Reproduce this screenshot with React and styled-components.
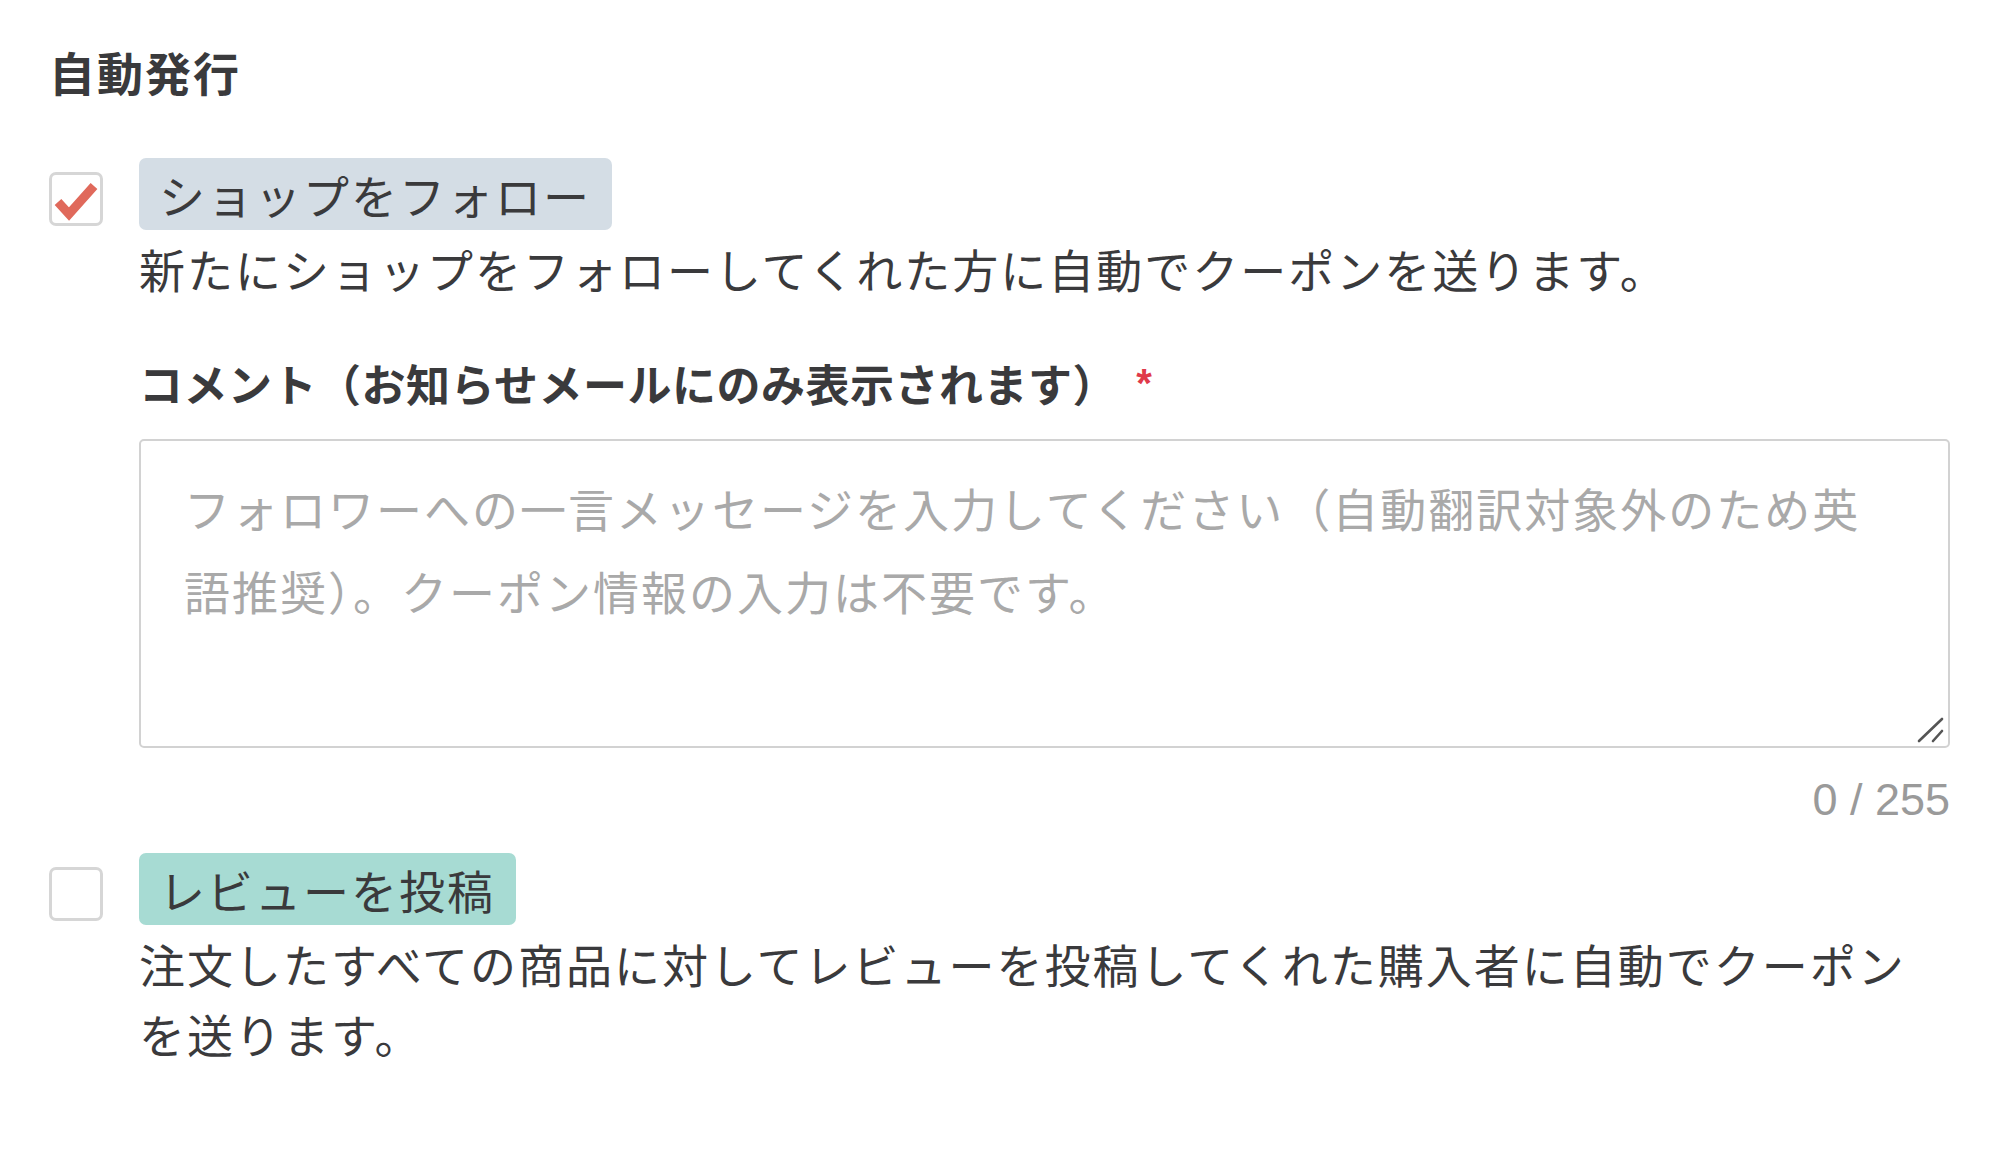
import React from "react";
import styled, { createGlobalStyle } from "styled-components";

const GlobalStyle = createGlobalStyle`
  html, body {
    margin: 0;
    padding: 0;
    background: #ffffff;
  }
  body {
    font-family: "Noto Sans CJK JP", "Noto Sans", sans-serif;
    color: #3a3a3c;
  }
`;

const Page = styled.div`
  padding: 36px 58px 40px 49px;
`;

const Heading = styled.h2`
  margin: 0 0 52px;
  font-size: 46px;
  line-height: 70px;
  font-weight: 700;
  letter-spacing: 2px;
`;

const OptionList = styled.div`
  display: flex;
  flex-direction: column;
  gap: 18px;
`;

const Option = styled.div`
  display: flex;
  align-items: flex-start;
  gap: 36px;
`;

const CheckBox = styled.span`
  flex: none;
  width: 54px;
  height: 54px;
  margin-top: 14px;
  box-sizing: border-box;
  border: 3px solid #d6d6d6;
  border-radius: 7px;
  background: #fff;
  display: flex;
  align-items: center;
  justify-content: center;
`;

const Body = styled.div`
  flex: 1;
  min-width: 0;
`;

const Tag = styled.span`
  display: inline-block;
  height: 72px;
  line-height: 72px;
  padding: 0 21px 0 20px;
  border-radius: 7px;
  font-size: 46px;
  letter-spacing: 2px;
  background: ${(p) => p.$bg};
`;

const Desc = styled.p`
  margin: 3px 0 0;
  font-size: 46px;
  line-height: 70px;
  letter-spacing: 2px;
`;

const Field = styled.div`
  margin-top: 45px;
  display: flex;
  flex-direction: column;
`;

const Label = styled.label`
  font-size: 44px;
  line-height: 70px;
  font-weight: 700;
  letter-spacing: 0.5px;
`;

const Required = styled.span`
  margin-left: 19px;
  color: #e03a4a;
  font-family: "Liberation Sans", sans-serif;
  font-weight: 700;
  font-size: 40px;
  vertical-align: top;
`;

const AreaWrap = styled.div`
  position: relative;
  margin-top: 21px;
`;

const TextArea = styled.textarea`
  display: block;
  width: 100%;
  height: 309px;
  box-sizing: border-box;
  padding: 25px 43px;
  border: 2px solid #d2d2d2;
  border-radius: 5px;
  font-family: "Noto Sans CJK JP", "Noto Sans", sans-serif;
  font-size: 46px;
  line-height: 83px;
  letter-spacing: 2px;
  color: #3a3a3c;
  outline: none;
  resize: none;

  &::placeholder {
    color: #a9a9a9;
  }
`;

const Grip = styled.svg`
  position: absolute;
  right: 6px;
  bottom: 4px;
  pointer-events: none;
`;

const Counter = styled.div`
  margin-top: 17px;
  text-align: right;
  font-family: "Liberation Sans", sans-serif;
  font-size: 45px;
  line-height: 70px;
  color: #9a9a9a;
`;

const CheckMark = () => (
  <svg width="48" height="48" viewBox="0 0 48 48">
    <polyline
      points="6,27 17,39 42,11"
      fill="none"
      stroke="#e0695b"
      strokeWidth="9"
      strokeLinejoin="miter"
    />
  </svg>
);

const ResizeGrip = () => (
  <Grip width="28" height="28" viewBox="0 0 28 28">
    <line x1="3" y1="25" x2="26" y2="3" stroke="#555" strokeWidth="2.6" strokeLinecap="round" />
    <line x1="17" y1="25" x2="26" y2="15" stroke="#555" strokeWidth="2.6" strokeLinecap="round" />
  </Grip>
);

export default function App() {
  return (
    <Page>
      <GlobalStyle />
      <Heading>自動発行</Heading>
      <OptionList>
        <Option>
          <CheckBox>
            <CheckMark />
          </CheckBox>
          <Body>
            <Tag $bg="#d4dde5">ショップをフォロー</Tag>
            <Desc>新たにショップをフォローしてくれた方に自動でクーポンを送ります。</Desc>
            <Field>
              <Label>
                コメント（お知らせメールにのみ表示されます）
                <Required>*</Required>
              </Label>
              <AreaWrap>
                <TextArea placeholder="フォロワーへの一言メッセージを入力してください（自動翻訳対象外のため英語推奨）。クーポン情報の入力は不要です。" />
                <ResizeGrip />
              </AreaWrap>
              <Counter>0 / 255</Counter>
            </Field>
          </Body>
        </Option>
        <Option>
          <CheckBox />
          <Body>
            <Tag $bg="#a7dbd3">レビューを投稿</Tag>
            <Desc>
              注文したすべての商品に対してレビューを投稿してくれた購入者に自動でクーポンを送ります。
            </Desc>
          </Body>
        </Option>
      </OptionList>
    </Page>
  );
}
